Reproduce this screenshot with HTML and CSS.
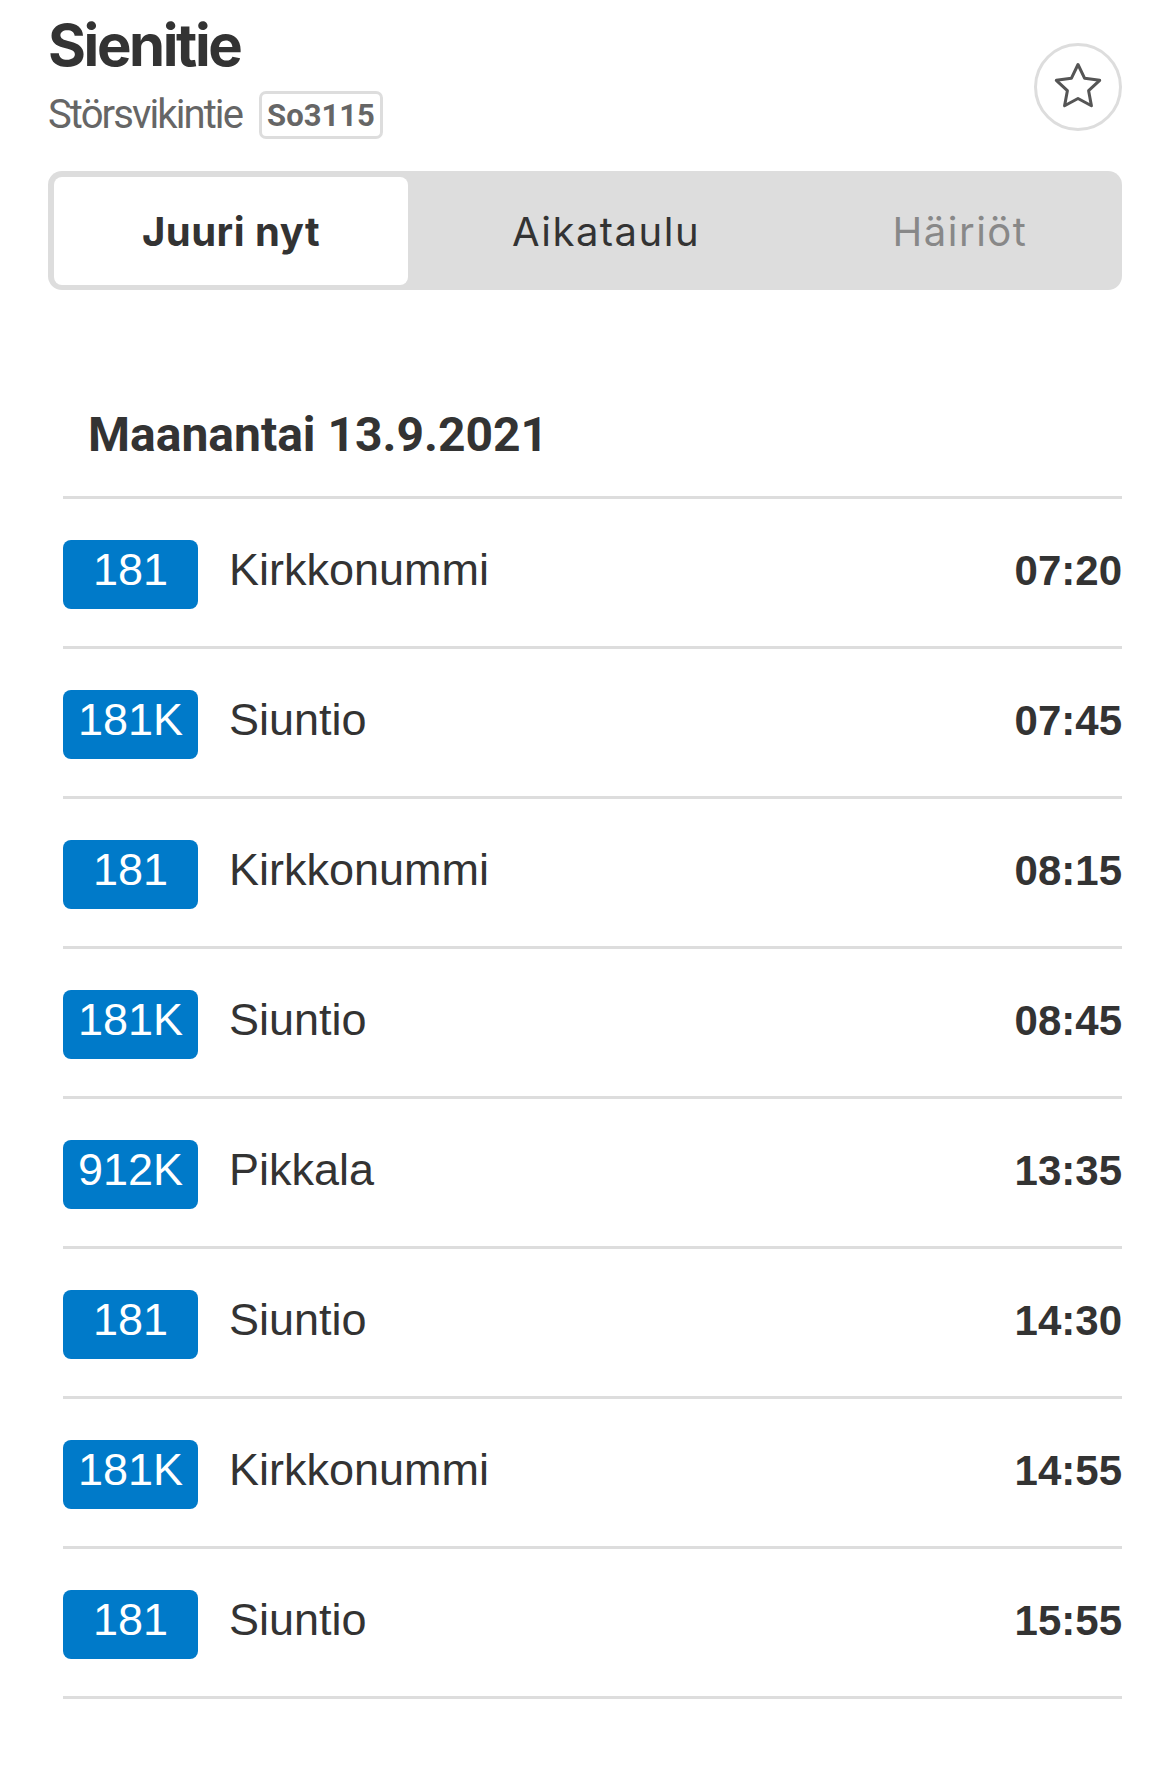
FILE: index.html
```html
<!DOCTYPE html>
<html lang="fi">
<head>
<meta charset="utf-8">
<title>Sienitie</title>
<link rel="stylesheet" href="styles.css">
</head>
<body>
<div class="page">
  <header class="header">
    <div class="stop-info">
      <h1 class="title">Sienitie</h1>
      <div class="sub">
        <span class="stop-name">Störsvikintie</span>
        <span class="stop-code">So3115</span>
      </div>
    </div>
    <button class="fav" aria-label="Lisää suosikiksi">
      <svg class="star" viewBox="0 0 24 24" width="56" height="56" aria-hidden="true">
        <path d="M12 2.8l2.85 5.9 6.45.85-4.75 4.45 1.2 6.45L12 17.35l-5.75 3.1 1.2-6.45L2.7 9.55l6.45-.85z" fill="none" stroke="#555" stroke-width="1.3" stroke-linejoin="round"/>
      </svg>
    </button>
  </header>

  <nav class="tabs">
    <div class="tab tab-active">Juuri nyt</div>
    <div class="tab">Aikataulu</div>
    <div class="tab tab-disabled">Häiriöt</div>
  </nav>

  <h2 class="day">Maanantai 13.9.2021</h2>

  <ul class="departures">
    <li class="row"><span class="line">181</span><span class="dest">Kirkkonummi</span><span class="time">07:20</span></li>
    <li class="row"><span class="line">181K</span><span class="dest">Siuntio</span><span class="time">07:45</span></li>
    <li class="row"><span class="line">181</span><span class="dest">Kirkkonummi</span><span class="time">08:15</span></li>
    <li class="row"><span class="line">181K</span><span class="dest">Siuntio</span><span class="time">08:45</span></li>
    <li class="row"><span class="line">912K</span><span class="dest">Pikkala</span><span class="time">13:35</span></li>
    <li class="row"><span class="line">181</span><span class="dest">Siuntio</span><span class="time">14:30</span></li>
    <li class="row"><span class="line">181K</span><span class="dest">Kirkkonummi</span><span class="time">14:55</span></li>
    <li class="row"><span class="line">181</span><span class="dest">Siuntio</span><span class="time">15:55</span></li>
  </ul>
</div>
</body>
</html>
```
FILE: styles.css
```css
html, body {
  margin: 0;
  padding: 0;
  background: #fff;
}

body {
  width: 1170px;
  color: #333;
  font-family: "Liberation Sans", Arial, sans-serif;
}

.page {
  padding: 10px 48px 0 48px;
}

.header {
  display: flex;
  justify-content: space-between;
  align-items: flex-start;
}

.title {
  margin: 0;
  font-family: Inter, "Liberation Sans", sans-serif;
  font-weight: 700;
  font-size: 58px;
  line-height: 70px;
  letter-spacing: -2.4px;
  color: #333;
}

.sub {
  display: flex;
  align-items: center;
  gap: 17px;
  margin-top: 11px;
  height: 48px;
}

.stop-name {
  font-family: Roboto, "Liberation Sans", sans-serif;
  font-size: 40px;
  line-height: 48px;
  letter-spacing: -1.9px;
  color: #666;
}

.stop-code {
  box-sizing: border-box;
  width: 124px;
  height: 48px;
  border: 3px solid #ddd;
  border-radius: 7px;
  display: flex;
  align-items: center;
  justify-content: center;
  font-family: Roboto, "Liberation Sans", sans-serif;
  font-weight: 700;
  font-size: 31px;
  color: #666;
}

.fav {
  box-sizing: border-box;
  width: 88px;
  height: 88px;
  margin-top: 33px;
  padding: 0;
  border: 3px solid #ddd;
  border-radius: 50%;
  background: #fff;
  display: flex;
  align-items: center;
  justify-content: center;
}

.star {
  display: block;
  margin-top: -2px;
}

.tabs {
  margin-top: 32px;
  background: #ddd;
  border-radius: 14px;
  padding: 6px 6px 5px 6px;
  display: grid;
  grid-template-columns: 354px 396px 1fr;
}

.tab {
  height: 108px;
  display: flex;
  align-items: center;
  justify-content: center;
  font-family: Inter, "Liberation Sans", sans-serif;
  font-weight: 400;
  font-size: 40px;
  letter-spacing: 1.5px;
  color: #333;
}

.tab-active {
  background: #fff;
  border-radius: 8px;
  font-weight: 700;
  letter-spacing: 0.5px;
}

.tab-disabled {
  color: #888;
}

.day {
  margin: 117px 0 0 0;
  padding-left: 40px;
  font-family: Roboto, "Liberation Sans", sans-serif;
  font-weight: 700;
  font-size: 48px;
  line-height: 56px;
  color: #333;
}

.departures {
  list-style: none;
  margin: 33px 0 0 15px;
  padding: 0;
}

.row {
  display: flex;
  align-items: baseline;
  border-top: 3px solid #ddd;
  padding: 41px 0 37px 0;
}

.row:last-child {
  border-bottom: 3px solid #ddd;
}

.line {
  box-sizing: border-box;
  width: 135px;
  height: 69px;
  padding-bottom: 10px;
  line-height: 59px;
  background: #007ac9;
  color: #fff;
  border-radius: 8px;
  text-align: center;
  font-size: 45px;
}

.dest {
  flex: 1;
  margin-left: 31px;
  font-size: 45px;
  line-height: 52px;
  color: #333;
}

.time {
  font-weight: 700;
  font-size: 42px;
  line-height: 52px;
  color: #333;
}
```
